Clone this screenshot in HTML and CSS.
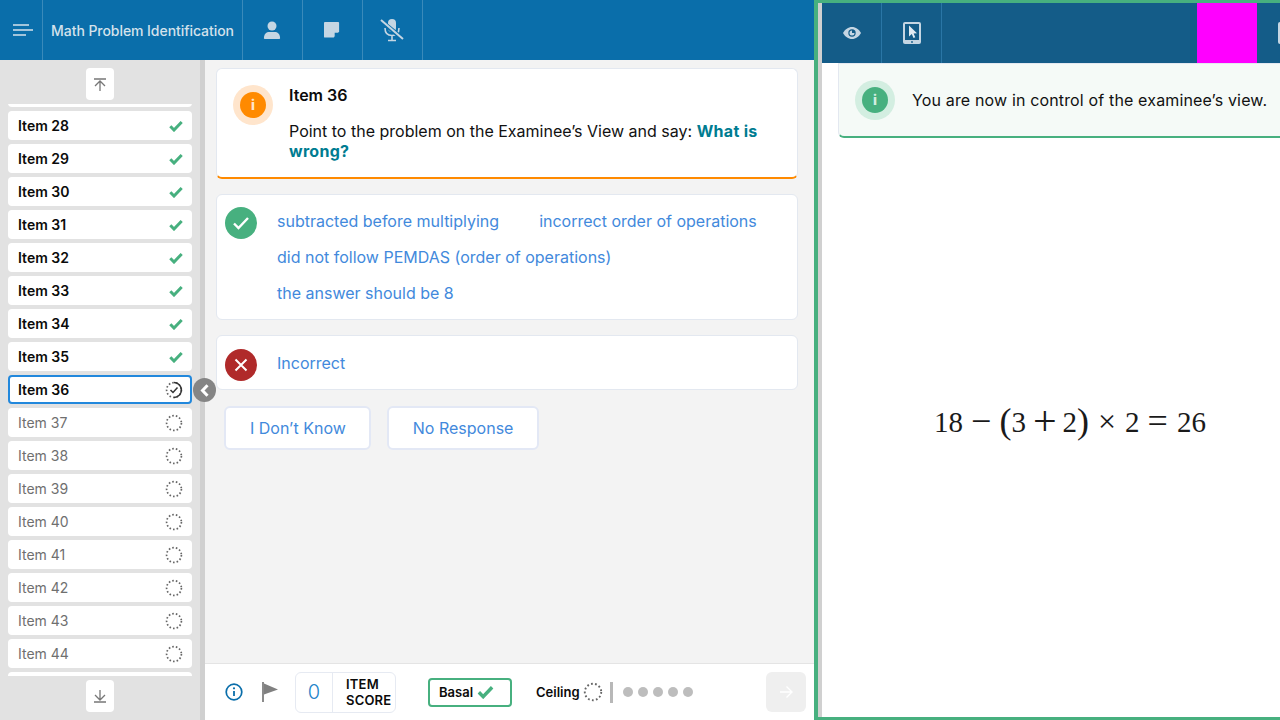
FILE: index.html
```html
<!DOCTYPE html>
<html lang="en">
<head>
<meta charset="utf-8">
<title>Math Problem Identification</title>
<link rel="stylesheet" href="styles.css">
</head>
<body>
<svg class="defs" width="0" height="0" aria-hidden="true">
  <symbol id="chk" viewBox="0 0 14 12"><path d="M1.300 6.300 5 10 12.700 2" fill="none" stroke="currentColor" stroke-width="3"/></symbol>
  <symbol id="dot" viewBox="0 0 18 18"><circle cx="9" cy="9" r="7.400" fill="none" stroke="#666" stroke-width="1.700" stroke-dasharray="1.600 2.050"/></symbol>
</svg>
<div class="app">
  <section class="left">
    <header class="topbar">
      <div class="cell menu"><svg width="20" height="12" viewBox="0 0 20 12"><path d="M0 1h16M0 6h20M0 11h13" stroke="#d5e2ec" stroke-width="1.500"/></svg></div>
      <div class="cell title">Math Problem Identification</div>
      <div class="cell icon"><svg width="18" height="18" viewBox="0 0 20 20" fill="#c5d6e3"><circle cx="10" cy="5.600" r="5"/><path d="M1 19.200c0-5 3-7 6-7h6c3 0 6 2 6 7 0 .5-.4.8-1 .8H2c-.6 0-1-.3-1-.8z"/></svg></div>
      <div class="cell icon"><svg width="16" height="16" viewBox="0 0 18 18"><path d="M1 0h15a1 1 0 0 1 1 1v10l-6 6.500H1a1 1 0 0 1-1-1V1a1 1 0 0 1 1-1z" fill="#c5d6e3"/><path d="M12 17v-5h5" fill="#0a6eaa"/></svg></div>
      <div class="cell icon"><svg width="26" height="24" viewBox="0 0 26 24" fill="none"><rect x="9" y="1" width="8" height="13" rx="4" fill="#c5d6e3"/><path d="M6 10c0 5 3 7.500 7 7.500s7-2.500 7-7.500M13 18v4M9 22.500h8" stroke="#c5d6e3" stroke-width="1.600"/><path d="M2 3l22 18" stroke="#0a6eaa" stroke-width="4.500"/><path d="M2 2l22 19" stroke="#c5d6e3" stroke-width="2"/></svg></div>
    </header>
    <div class="work">
      <aside class="side">
        <button class="jump"><svg width="12" height="13" viewBox="0 0 12 13" fill="none" stroke="#777" stroke-width="1.300"><path d="M0 1h12M6 3v10M1 8l5-5 5 5"/></svg></button>
        <div class="list">
          <div class="rows">
            <div class="row"></div>
            <div class="row done"><span>Item 28</span><svg class="ck"><use href="#chk"/></svg></div>
            <div class="row done"><span>Item 29</span><svg class="ck"><use href="#chk"/></svg></div>
            <div class="row done"><span>Item 30</span><svg class="ck"><use href="#chk"/></svg></div>
            <div class="row done"><span>Item 31</span><svg class="ck"><use href="#chk"/></svg></div>
            <div class="row done"><span>Item 32</span><svg class="ck"><use href="#chk"/></svg></div>
            <div class="row done"><span>Item 33</span><svg class="ck"><use href="#chk"/></svg></div>
            <div class="row done"><span>Item 34</span><svg class="ck"><use href="#chk"/></svg></div>
            <div class="row done"><span>Item 35</span><svg class="ck"><use href="#chk"/></svg></div>
            <div class="row done current"><span>Item 36</span><svg class="dt" viewBox="0 0 18 18"><use href="#dot"/><path d="M9 1.600a7.400 7.400 0 0 1 0 14.800" fill="none" stroke="#333" stroke-width="1.500"/><path d="M5.500 9 8 11.500l4.500-5" fill="none" stroke="#333" stroke-width="1.500"/></svg></div>
            <div class="row"><span>Item 37</span><svg class="dt"><use href="#dot"/></svg></div>
            <div class="row"><span>Item 38</span><svg class="dt"><use href="#dot"/></svg></div>
            <div class="row"><span>Item 39</span><svg class="dt"><use href="#dot"/></svg></div>
            <div class="row"><span>Item 40</span><svg class="dt"><use href="#dot"/></svg></div>
            <div class="row"><span>Item 41</span><svg class="dt"><use href="#dot"/></svg></div>
            <div class="row"><span>Item 42</span><svg class="dt"><use href="#dot"/></svg></div>
            <div class="row"><span>Item 43</span><svg class="dt"><use href="#dot"/></svg></div>
            <div class="row"><span>Item 44</span><svg class="dt"><use href="#dot"/></svg></div>
            <div class="row"></div>
          </div>
        </div>
        <button class="jump"><svg width="12" height="13" viewBox="0 0 12 13" fill="none" stroke="#777" stroke-width="1.300"><path d="M0 12h12M6 0v10M1 5l5 5 5-5"/></svg></button>
      </aside>
      <div class="split"><button class="collapse"><svg width="9" height="13" viewBox="0 0 9 13" fill="none" stroke="#fff" stroke-width="3"><path d="M7.500 1.200 2.500 6.500l5 5.300"/></svg></button></div>
      <main class="main">
        <div class="content">
          <div class="card prompt">
            <div class="halo orange"><span class="disc">i</span></div>
            <div class="ptext">
              <h2>Item 36</h2>
              <p>Point to the problem on the Examinee’s View and say: <b>What is wrong?</b></p>
            </div>
          </div>
          <div class="card answers">
            <span class="mark ok"><svg width="18" height="14" viewBox="0 0 18 14" fill="none" stroke="#fff" stroke-width="2.400"><path d="M2 7.500 6.500 12 16 2"/></svg></span>
            <div class="opts">
              <a>subtracted before multiplying</a><a>incorrect order of operations</a>
              <a>did not follow PEMDAS (order of operations)</a>
              <a>the answer should be 8</a>
            </div>
          </div>
          <div class="card wrong">
            <span class="mark bad"><svg width="14" height="14" viewBox="0 0 14 14" fill="none" stroke="#fff" stroke-width="2"><path d="M1.500 1.500l11 11M12.500 1.500l-11 11"/></svg></span>
            <a>Incorrect</a>
          </div>
          <div class="btns"><button>I Don’t Know</button><button>No Response</button></div>
        </div>
        <footer class="foot">
          <svg class="finfo" width="18" height="18" viewBox="0 0 18 18" fill="none"><circle cx="9" cy="9" r="7.800" stroke="#0a6eaa" stroke-width="1.700"/><path d="M9 8v5" stroke="#0a6eaa" stroke-width="1.800"/><circle cx="9" cy="5.300" r="1.100" fill="#0a6eaa"/></svg>
          <svg class="flag" width="16" height="20" viewBox="0 0 16 20"><path d="M1 0v20" stroke="#777" stroke-width="1.700"/><path d="M2 1.500 16 7.500 2 12.500z" fill="#808080"/></svg>
          <div class="score"><span class="num">0</span><span class="lab">ITEM SCORE</span></div>
          <div class="basal">Basal <svg width="17" height="14" viewBox="0 0 14 12"><use href="#chk"/></svg></div>
          <div class="ceil">Ceiling <svg width="20" height="20"><use href="#dot"/></svg></div>
          <i class="bar"></i>
          <div class="dots"><i></i><i></i><i></i><i></i><i></i></div>
          <button class="next"><svg width="14" height="14" viewBox="0 0 14 14" fill="none" stroke="#fff" stroke-width="1.400"><path d="M1 7h12M7.500 1.500 13 7l-5.500 5.500"/></svg></button>
        </footer>
      </main>
    </div>
  </section>
  <section class="right">
    <div class="rbar">
      <div class="rcell"><svg width="18" height="12" viewBox="0 0 18 12"><path d="M0 6c2-3.500 5.200-6 9-6s7 2.500 9 6c-2 3.500-5.200 6-9 6S2 9.500 0 6z" fill="#c5d6e3"/><circle cx="9" cy="6" r="3.700" fill="#145c88"/><path d="M9 3.500V6h2.500A2.500 2.500 0 1 1 9 3.500z" fill="#c5d6e3"/></svg></div>
      <div class="rcell"><svg width="18" height="22" viewBox="0 0 18 22"><rect width="18" height="22" rx="2" fill="#c5d6e3"/><rect x="2" y="2" width="14" height="16" fill="#145c88"/><path d="M6 3.500v11l2.800-2.500 1.700 4 1.800-.8-1.700-3.800 3.400-.2z" fill="#e2ebf2"/><circle cx="9" cy="20" r=".9" fill="#145c88"/></svg></div>
      <div class="rfill"></div>
      <div class="magenta"></div>
      <div class="rlast"><svg width="18" height="22" viewBox="0 0 18 22"><rect width="18" height="22" rx="2" fill="#c5d6e3"/></svg></div>
    </div>
    <div class="notice">
      <div class="halo green"><span class="disc">i</span></div>
      <span>You are now in control of the examinee’s view.</span>
    </div>
    <div class="stage"><div class="math"><span>18</span><span class="op minus">−</span><span class="paren">(</span><span>3</span><span class="op plus">+</span><span>2</span><span class="paren">)</span><span class="op times">×</span><span>2</span><span class="op eq">=</span><span>26</span></div></div>
  </section>
</div>
</body>
</html>
```
FILE: styles.css
```css
*{box-sizing:border-box}
html,body{margin:0;height:720px;overflow:hidden;background:#fff}
body{font-family:Inter,"Liberation Sans",sans-serif;font-size:16px;color:#111}
button{font-family:inherit;cursor:pointer}
.defs{position:absolute}
.app{display:flex;width:1318px;height:720px}
.left{width:814px;display:flex;flex-direction:column;flex:none}
.topbar{height:60px;background:#0a6eaa;display:flex;flex:none}
.cell{display:flex;align-items:center;justify-content:center;border-right:1px solid #3a8aba;height:60px}
.menu{width:43px;padding-left:3px}
.title{width:200px;font-size:14px;font-weight:500;color:#d4e2ec;white-space:nowrap;letter-spacing:-.06px}
.icon{width:60px;padding-right:2px}
.work{flex:1;display:flex;min-height:0}
.side{width:200px;background:#e2e2e2;display:flex;flex-direction:column;align-items:center;padding:8px 0}
.jump{width:28px;height:32px;flex:none;background:#fff;border:0;border-radius:4px;padding:0;display:flex;align-items:center;justify-content:center}
.list{flex:1;width:184px;overflow:hidden;margin:4px 0;min-height:0}
.rows{display:flex;flex-direction:column;gap:4px;margin-top:-26px}
.row{flex:none;height:29px;background:#fff;border-radius:4px;display:flex;align-items:center;justify-content:space-between;padding:0 9px 0 10px;font-size:14px;color:#6f6f6f}
.done{font-weight:600;color:#0b0b0b}
.current{border:2px solid #2288dc;padding:0 7px 0 8px}
.ck{width:14px;height:12px;color:#47b07f}
.dt{width:18px;height:18px}
.split{width:5px;background:#d0d0d0;position:relative}
.collapse{position:absolute;left:-7px;top:318px;width:23px;height:24px;border-radius:50%;border:0;background:#858585;padding:0;display:flex;align-items:center;justify-content:center}
.main{width:609px;background:#f3f3f3;display:flex;flex-direction:column}
.content{flex:1;padding:8px 16px 0 11px;display:flex;flex-direction:column;gap:15px}
.card{background:#fff;border:1px solid #e3e8f0;border-radius:6px;display:flex}
.prompt{height:111px;border-bottom:2px solid #ff8a00;padding:16px 16px 0;gap:16px}
.halo{width:40px;height:40px;border-radius:50%;display:flex;align-items:center;justify-content:center;flex:none}
.halo.orange{background:#ffe5cc}
.halo.orange .disc{background:#ff8a00;color:#ffe5cc}
.halo.green{background:#d3eee1}
.halo.green .disc{background:#47b07f;color:#d3eee1}
.disc{width:26px;height:26px;border-radius:50%;font-weight:800;font-size:14px;display:flex;align-items:center;justify-content:center;line-height:1}
.ptext{flex:1;padding-right:16px}
.ptext h2{margin:0;font-size:16px;font-weight:600;color:#0b0b0b;line-height:20px}
.ptext p{margin:16px 0 0;line-height:20px;color:#111}
.ptext b{color:#007c91;font-weight:700;letter-spacing:.3px}
.answers{height:126px;padding:12px 8px;gap:20px}
.mark{width:32px;height:32px;border-radius:50%;display:flex;align-items:center;justify-content:center;flex:none}
.ok{background:#47b07f}
.bad{background:#b02a2a;margin-top:4px}
.opts{display:flex;flex-wrap:wrap;align-content:flex-start;column-gap:40px;row-gap:12px;width:500px;padding-top:2px}
.opts a,.wrong a,.btns button{color:#4289dc;line-height:24px;font-size:16px}
.wrong{height:55px;padding:0 8px;gap:20px;align-items:center}
.btns{display:flex;gap:16px;padding-left:8px;margin-top:1px}
.btns button{height:44px;background:#fff;border:2px solid #e3e8f5;border-radius:6px;padding:0 24px}
.btns button:first-child{padding-right:23px}
.foot{height:57px;background:#fff;border-top:1px solid #e4e4e4;display:flex;align-items:center;padding:0 8px 0 20px;flex:none}
.finfo{margin:0 19px 0 0}
.flag{margin-right:17px;margin-top:-1px}
.score{width:101px;height:41px;border:1px solid #e6eaf2;border-radius:6px;display:flex;align-items:center;margin-right:32px}
.num{width:37px;height:39px;border-right:1px solid #e6eaf2;display:flex;align-items:center;justify-content:center;color:#1d83c9;font-size:20px;font-weight:300}
.lab{font-size:13px;font-weight:600;line-height:16px;padding-left:13px;width:62px;color:#0b0b0b;letter-spacing:.2px}
.basal{width:84px;height:29px;border:2px solid #47b07f;border-radius:4px;display:flex;align-items:center;padding-left:9px;gap:4px;font-size:13px;font-weight:600;color:#0b0b0b;margin-right:24px}
.basal svg{color:#47b07f}
.ceil{display:flex;align-items:center;gap:3px;font-size:13px;font-weight:600;color:#0b0b0b}
.bar{width:3px;height:21px;background:#b8b8b8;margin:0 10px 0 7px}
.dots{display:flex;gap:5px}
.dots i{width:10px;height:10px;border-radius:50%;background:#bdbdbd}
.next{margin-left:auto;width:40px;height:40px;border:0;border-radius:6px;background:#efefef;display:flex;align-items:center;justify-content:center;padding:0}
.right{width:504px;flex:none;border:solid #47b07f;border-width:3px 0 3px 4px;display:flex;flex-direction:column;padding-left:4px;background:#fff;position:relative}
.right::before{content:"";position:absolute;left:0;top:0;bottom:0;width:4px;background:#d0d0d0}
.rbar{height:60px;background:#145c88;display:flex;flex:none}
.rcell{width:60px;display:flex;align-items:center;justify-content:center;border-right:1px solid #2a76a6}
.rfill{flex:1}
.magenta{width:60px;background:#f0f}
.rlast{width:61px;display:flex;align-items:center;padding-left:21px}
.notice{height:75px;margin:0 16px;background:#f5faf7;border:1px solid #e3e8f0;border-bottom:2px solid #47b07f;border-radius:0 0 6px 6px;display:flex;align-items:center;gap:17px;padding:0 16px;flex:none;color:#111;white-space:nowrap;font-size:16px;letter-spacing:.15px}
.stage{flex:1;display:flex;align-items:center;justify-content:center;padding-bottom:11px}
.math{font-family:"Liberation Serif",serif;font-size:29px;line-height:36px;height:36px;color:#1a1a1a;display:flex;align-items:center;white-space:nowrap}
.op{font-size:36px;line-height:36px;margin-top:-3px}
.minus{margin-left:8px;margin-right:8px}
.plus{font-size:42px;margin-left:7px;margin-right:6px}
.times{margin-left:9px;margin-right:9px;font-size:32px}
.eq{margin-left:8px;margin-right:9px}
.paren{font-size:36px;font-weight:400;margin-top:-3px}
```
